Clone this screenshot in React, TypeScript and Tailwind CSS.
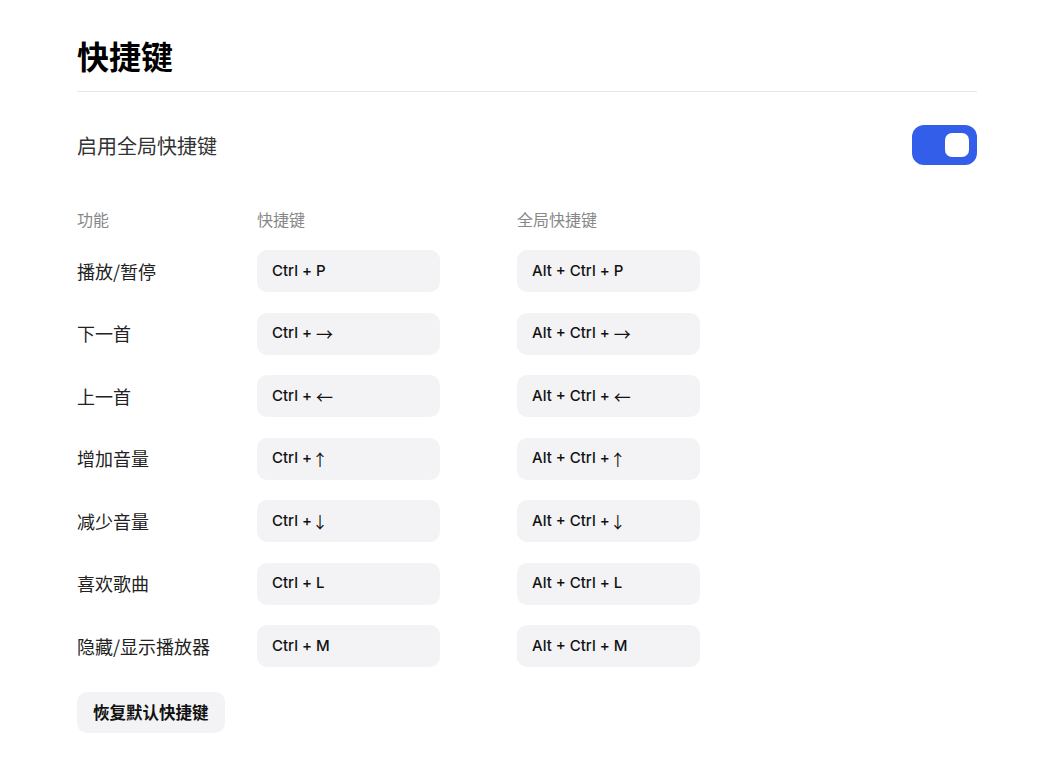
import { useState } from "react";

const shortcuts = [
  { id: 1, name: "播放/暂停", local: ["Ctrl +", "P"], global: ["Alt + Ctrl +", "P"] },
  { id: 2, name: "下一首", local: ["Ctrl +", "→"], global: ["Alt + Ctrl +", "→"] },
  { id: 3, name: "上一首", local: ["Ctrl +", "←"], global: ["Alt + Ctrl +", "←"] },
  { id: 4, name: "增加音量", local: ["Ctrl +", "↑"], global: ["Alt + Ctrl +", "↑"] },
  { id: 5, name: "减少音量", local: ["Ctrl +", "↓"], global: ["Alt + Ctrl +", "↓"] },
  { id: 6, name: "喜欢歌曲", local: ["Ctrl +", "L"], global: ["Alt + Ctrl +", "L"] },
  { id: 7, name: "隐藏/显示播放器", local: ["Ctrl +", "M"], global: ["Alt + Ctrl +", "M"] },
];

const KeyBox = ({ parts }: { parts: string[] }) => {
  const key = parts[1];
  let keyEl = <span className="ml-[4px]">{key}</span>;
  if (key === "→" || key === "←") {
    keyEl = (
      <span className="ml-[4px] font-['Noto_Sans_CJK_SC',sans-serif] font-normal text-[17px] leading-none">
        {key}
      </span>
    );
  } else if (key === "↑" || key === "↓") {
    keyEl = (
      <span className="font-['Noto_Sans_CJK_SC',sans-serif] font-normal text-[16px] leading-none">
        {key}
      </span>
    );
  }
  return (
    <div className="w-[183px] h-[42px] rounded-[10px] bg-[#f3f3f5] flex items-center pl-[15px] text-[15px] font-medium text-[#111] font-['Inter',sans-serif] whitespace-pre">
      <span>{parts[0]}</span>
      {keyEl}
    </div>
  );
};

const App = () => {
  const [enabled, setEnabled] = useState(true);

  return (
    <div className="min-h-[758px] bg-white font-['Noto_Sans_CJK_SC','Noto_Sans',sans-serif]">
      <div className="w-[900px] ml-[77px] pt-[31px]">
        <h1 className="text-[32px] leading-[48px] font-bold text-black pb-[12px] border-b border-[#e6e6e6]">
          快捷键
        </h1>

        <div className="flex items-center justify-between mt-[33px]">
          <span className="text-[20px] text-[#333] pt-[2px]">启用全局快捷键</span>
          <button
            onClick={() => setEnabled(!enabled)}
            className={`w-[65px] h-[40px] rounded-[12px] flex items-center px-[8px] ${
              enabled ? "bg-[#335eea] justify-end" : "bg-[#d9d9de] justify-start"
            }`}
          >
            <span className="w-[24px] h-[24px] rounded-[7px] bg-white" />
          </button>
        </div>

        <div className="flex mt-[42px] text-[16px] leading-[24px] text-[#888]">
          <div className="w-[180px]">功能</div>
          <div className="w-[260px]">快捷键</div>
          <div>全局快捷键</div>
        </div>

        <div className="flex flex-col gap-[20.5px] mt-[19px]">
          {shortcuts.map((s) => (
            <div key={s.id} className="flex items-center">
              <div className="w-[180px] text-[18px] text-[#222]">{s.name}</div>
              <div className="w-[260px]">
                <KeyBox parts={s.local} />
              </div>
              <KeyBox parts={s.global} />
            </div>
          ))}
        </div>

        <button className="mt-[25px] h-[41px] px-[16px] rounded-[10px] bg-[#f3f3f5] text-[16.5px] font-bold text-[#111]">
          恢复默认快捷键
        </button>
      </div>
    </div>
  );
};

export default App;
